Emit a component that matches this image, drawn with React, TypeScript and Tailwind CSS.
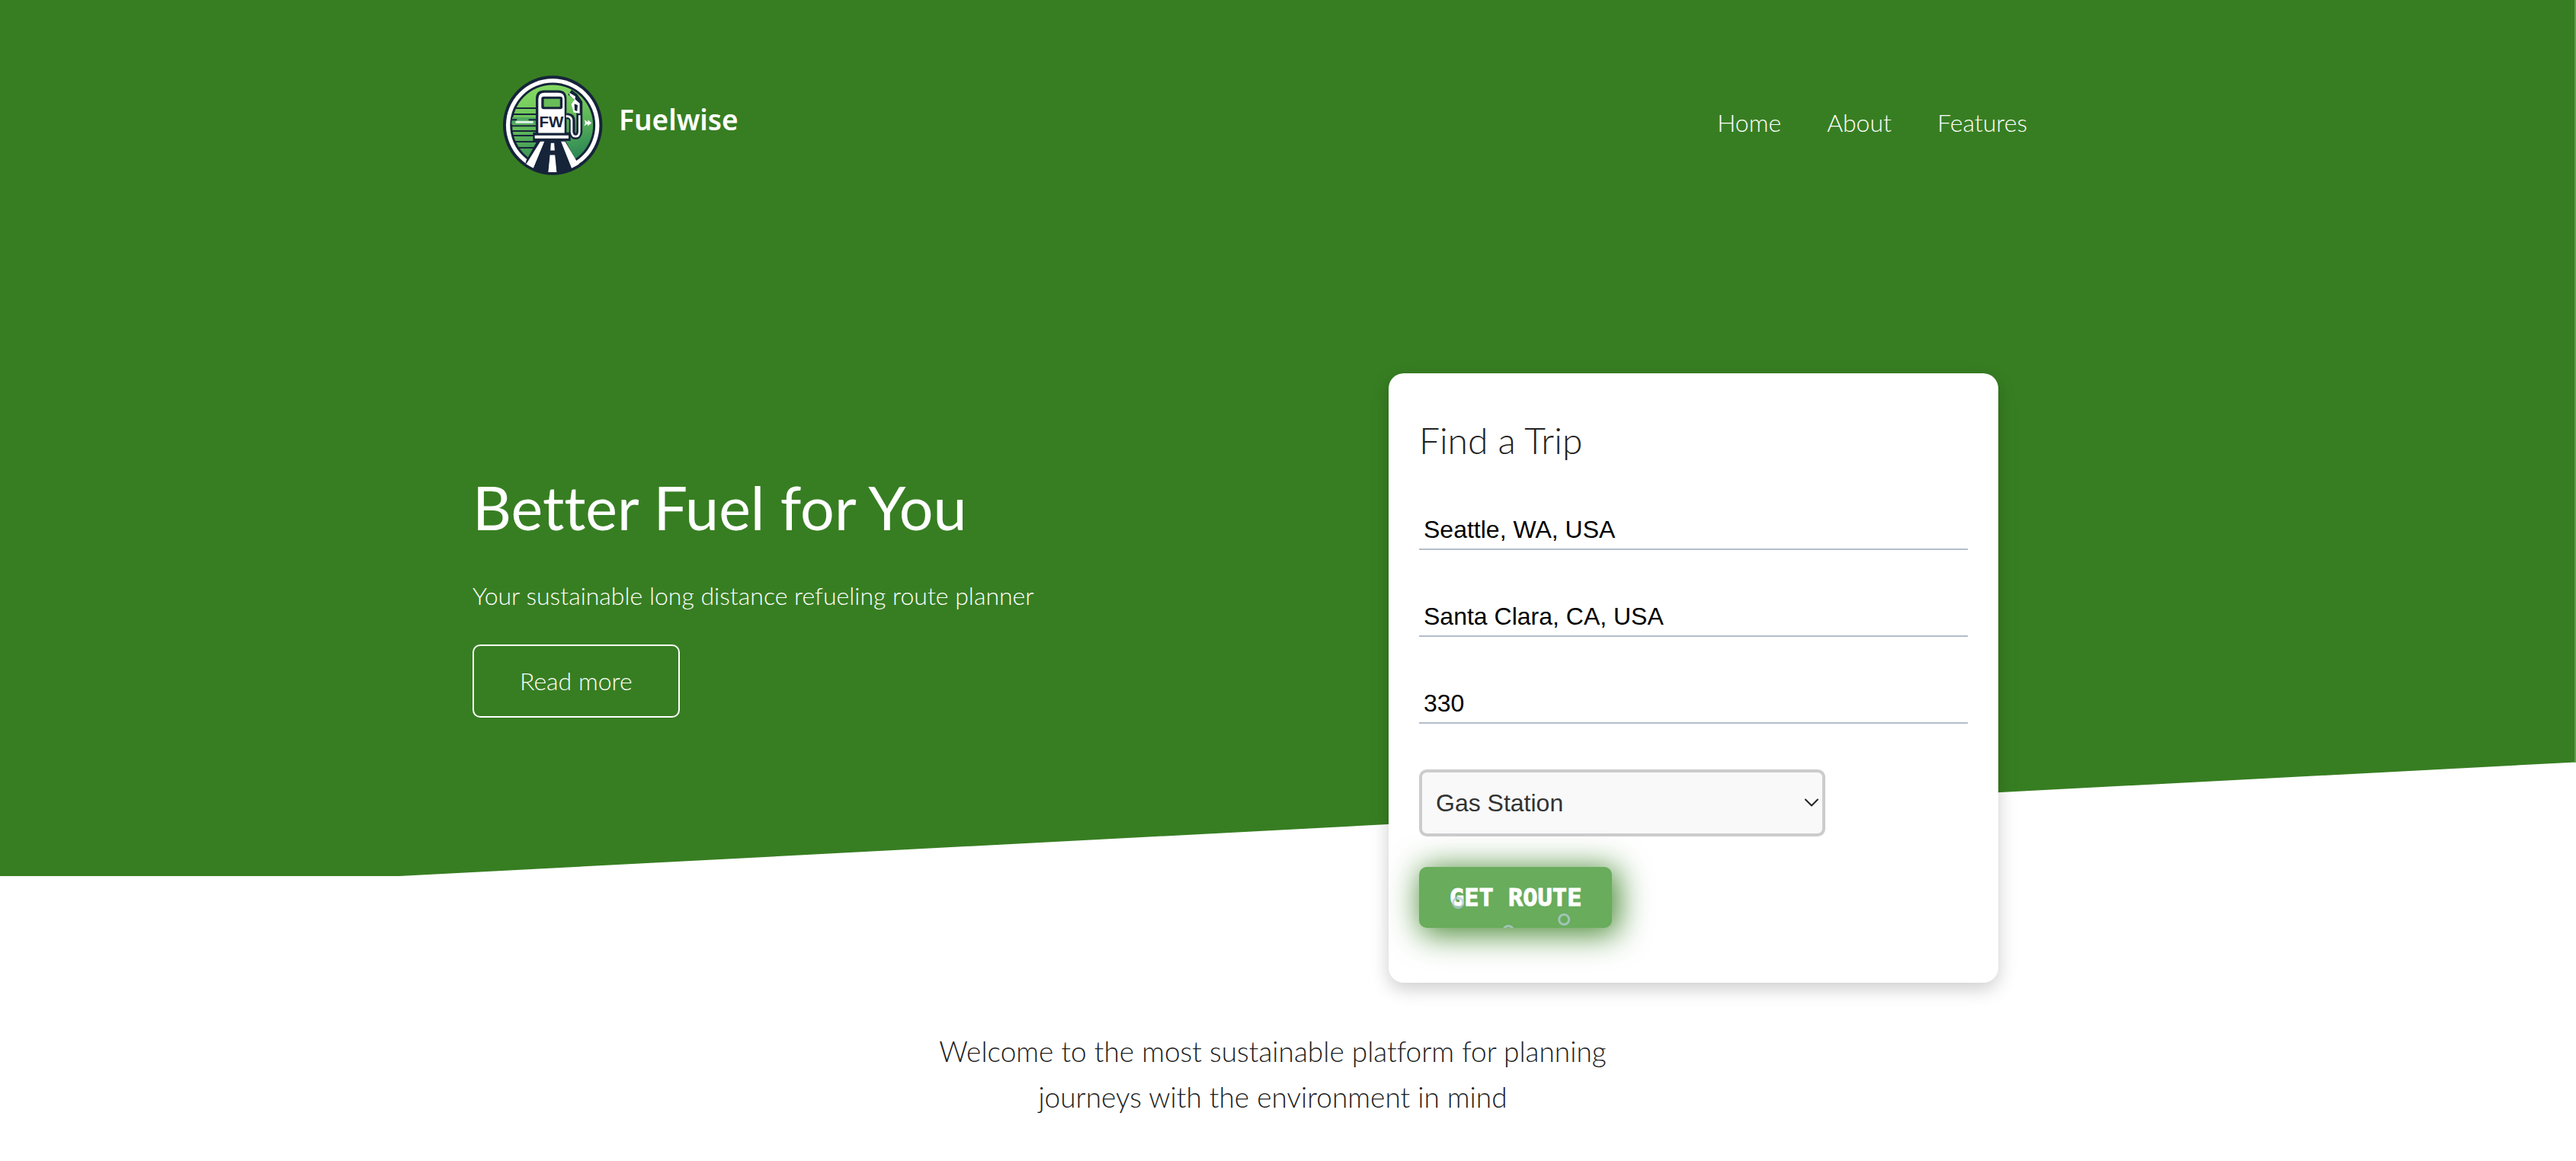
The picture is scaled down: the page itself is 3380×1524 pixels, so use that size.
import { useState } from "react";

const NAV_LINKS = ["Home", "About", "Features"];

function Logo() {
  return (
    <svg viewBox="0 0 435 435" className="size-36 shrink-0" role="img" aria-label="Fuelwise logo">
      <defs>
        <linearGradient id="sky" x1="0" y1="0" x2="0.25" y2="1">
          <stop offset="0" stopColor="#8be065" />
          <stop offset="0.45" stopColor="#6cc35a" />
          <stop offset="1" stopColor="#2f8a55" />
        </linearGradient>
        <clipPath id="disc">
          <circle cx="209" cy="222" r="163" />
        </clipPath>
        <clipPath id="ring">
          <circle cx="209" cy="222" r="186" />
        </clipPath>
      </defs>
      <circle cx="209" cy="222" r="197" fill="#16243a" />
      <circle cx="209" cy="222" r="185" fill="#ffffff" />
      <circle cx="209" cy="222" r="169" fill="#16243a" />
      <circle cx="209" cy="222" r="160" fill="url(#sky)" />
      <g clipPath="url(#disc)">
        <path d="M40 190h105v28H40z" fill="#4fa861" />
        <path d="M62 205h70v9H62z" fill="#e4f5e6" />
        <g stroke="#16243a" strokeWidth="6" strokeLinecap="round">
          <path d="M50 154h95M45 178h100M45 200h20M116 200h30M45 224h100M48 245h97M50 263h85M55 287h95M70 311h80" />
        </g>
      </g>
      <g clipPath="url(#ring)">
        <path d="M152 276 104 362 84 440h252l-34-76-46-88z" fill="#16243a" />
        <path d="M160 286h16l-46 112-40-6 20-26zM242 286h16l46 78 20 20-36 18z" fill="#ffffff" />
        <path d="M202 292h13l2 30h-17zM198 340h20l8 80h-36z" fill="#ffffff" />
        <path d="M84 372q50 46 125 46t125-46l20 60H64z" fill="#ffffff" />
        <path d="M146 362 132 396q30 12 58 12l6-60zM222 348l6 60q28 0 54-12l-18-46z" fill="#16243a" />
      </g>
      <path
        d="M142 250V116q0-33 33-33h56q33 0 33 33v134h16v34H131v-34z"
        fill="#16243a"
      />
      <path d="M152 252V118q0-25 25-25h54q25 0 25 25v134z" fill="#ffffff" />
      <path d="M138 262h134v12H138z" fill="#ffffff" />
      <rect x="164" y="108" width="84" height="50" rx="9" fill="#16243a" />
      <rect x="174" y="117" width="64" height="32" rx="3" fill="#69bd58" />
      <path d="M264 186h8q14 2 14 18v44q2 18 14 18t15-18V132l-18-26-20-15" fill="none" stroke="#16243a" strokeWidth="24" strokeLinejoin="round" />
      <path d="M262 186h6q16 2 16 18v44q2 18 16 18t15-18v-66" fill="none" stroke="#ffffff" strokeWidth="8" />
      <path d="m274 92 25 15-2 15-20-18z" fill="#ffffff" />
      <path d="m297 118 19 17v40l-24-4-9-32z" fill="#ffffff" />
      <path d="m295 137 13 5-2 24-10-4z" fill="#16243a" />
      <path d="m335 200 13 9 1-9 14 13-15 11-1-8-13 9 4-12z" fill="#ffffff" />
      <text
        x="204"
        y="230"
        textAnchor="middle"
        fontFamily="Liberation Sans, sans-serif"
        fontWeight="700"
        fontSize="62"
        fill="#16243a"
      >
        FW
      </text>
    </svg>
  );
}

function Header() {
  return (
    <header className="flex items-center justify-between px-9 pt-[91px]">
      <a href="#home" className="flex items-center gap-3">
        <Logo />
        <span className="mb-3 font-['Noto_Sans',sans-serif] text-[37px] leading-12 font-semibold">Fuelwise</span>
      </a>
      <nav className="mb-1 flex gap-[60px] pr-16 text-[32px] leading-12 font-light">
        {NAV_LINKS.map((link) => (
          <a key={link} href={`#${link.toLowerCase()}`}>
            {link}
          </a>
        ))}
      </nav>
    </header>
  );
}

const FIELD =
  "block h-[52px] w-full border-b-2 border-[#b4bdcb] bg-transparent px-1.5 font-['Liberation_Sans',sans-serif] text-[32px] text-black outline-none";

function TripForm() {
  const [start, setStart] = useState("Seattle, WA, USA");
  const [end, setEnd] = useState("Santa Clara, CA, USA");
  const [range, setRange] = useState("330");

  return (
    <form
      onSubmit={(e) => e.preventDefault()}
      className="w-full max-w-[800px] rounded-[20px] bg-white px-10 pt-10 pb-[72px] text-[#222222] shadow-[0_8px_24px_rgba(0,0,0,0.2)]"
    >
      <h2 className="text-5xl leading-24 font-light">Find a Trip</h2>
      <div className="mt-11 flex flex-col gap-[62px]">
        <input aria-label="Start" className={FIELD} value={start} onChange={(e) => setStart(e.target.value)} />
        <input aria-label="Destination" className={FIELD} value={end} onChange={(e) => setEnd(e.target.value)} />
        <input aria-label="Range in miles" className={FIELD} value={range} onChange={(e) => setRange(e.target.value)} />
      </div>
      <div className="relative mt-[60px] w-[533px] max-w-full">
        <select
          aria-label="Station type"
          className="h-[88px] w-full appearance-none rounded-[10px] border-4 border-[#cccccc] bg-[#f9f9f9] px-[18px] font-['Liberation_Sans',sans-serif] text-[32px] text-[#333333]"
        >
          <option>Gas Station</option>
          <option>Charging Station</option>
        </select>
        <svg
          viewBox="0 0 20 12"
          className="pointer-events-none absolute top-1/2 right-2 h-3 w-5 -translate-y-1/2"
          fill="none"
          stroke="#222222"
          strokeWidth="2"
          strokeLinecap="round"
          strokeLinejoin="round"
          aria-hidden="true"
        >
          <path d="m2 1.5 8 8 8-8" />
        </svg>
      </div>
      <button
        type="submit"
        className="relative mt-10 block h-20 rounded-[10px] bg-[#68ac5c] px-10 font-['DejaVu_Sans_Mono',monospace] text-[32px] leading-10 font-bold text-white shadow-[5px_5px_40px_4px_rgba(56,128,34,0.9)] [-webkit-text-stroke:1px_white]"
      >
        GET ROUTE
        <svg
          viewBox="0 0 253 80"
          className="absolute inset-0 size-full"
          fill="none"
          stroke="#b4cbd6"
          strokeOpacity="0.75"
          strokeWidth="3"
          aria-hidden="true"
        >
          <circle cx="51" cy="47" r="6.5" />
          <circle cx="190" cy="69" r="6.5" />
          <circle cx="117" cy="84" r="6.5" />
        </svg>
      </button>
    </form>
  );
}

export default function App() {
  return (
    <div className="bg-white font-['Lato',sans-serif] text-[#222222] [font-variant-ligatures:no-common-ligatures]">
      <div className="relative">
        <div className="absolute inset-x-0 top-0 bottom-[140px] border-r-2 border-[#649a56] bg-[#377e22] [clip-path:polygon(0_0,100%_0,100%_87%,15.5%_100%,0_100%)]" />
        <div className="relative mx-auto max-w-[2140px] text-white">
          <Header />
          <main className="mt-[255px] flex items-start justify-between gap-10">
            <section className="pt-32">
              <h1 className="text-[79px] leading-24">Better Fuel for You</h1>
              <p className="mt-11 text-[32px] leading-12 font-light">Your sustainable long distance refueling route planner</p>
              <a
                href="#about"
                className="mt-10 inline-block rounded-[10px] border-2 border-white px-[60px] py-[22px] text-[32px] leading-12 font-light"
              >
                Read more
              </a>
            </section>
            <div className="flex w-[938px] pr-[138px]">
              <TripForm />
            </div>
          </main>
        </div>
      </div>
      <p className="mx-auto max-w-[960px] pt-[60px] pr-10 pb-14 text-center text-[37px] leading-15 font-light">
        Welcome to the most sustainable platform for planning journeys with the environment in mind
      </p>
    </div>
  );
}
